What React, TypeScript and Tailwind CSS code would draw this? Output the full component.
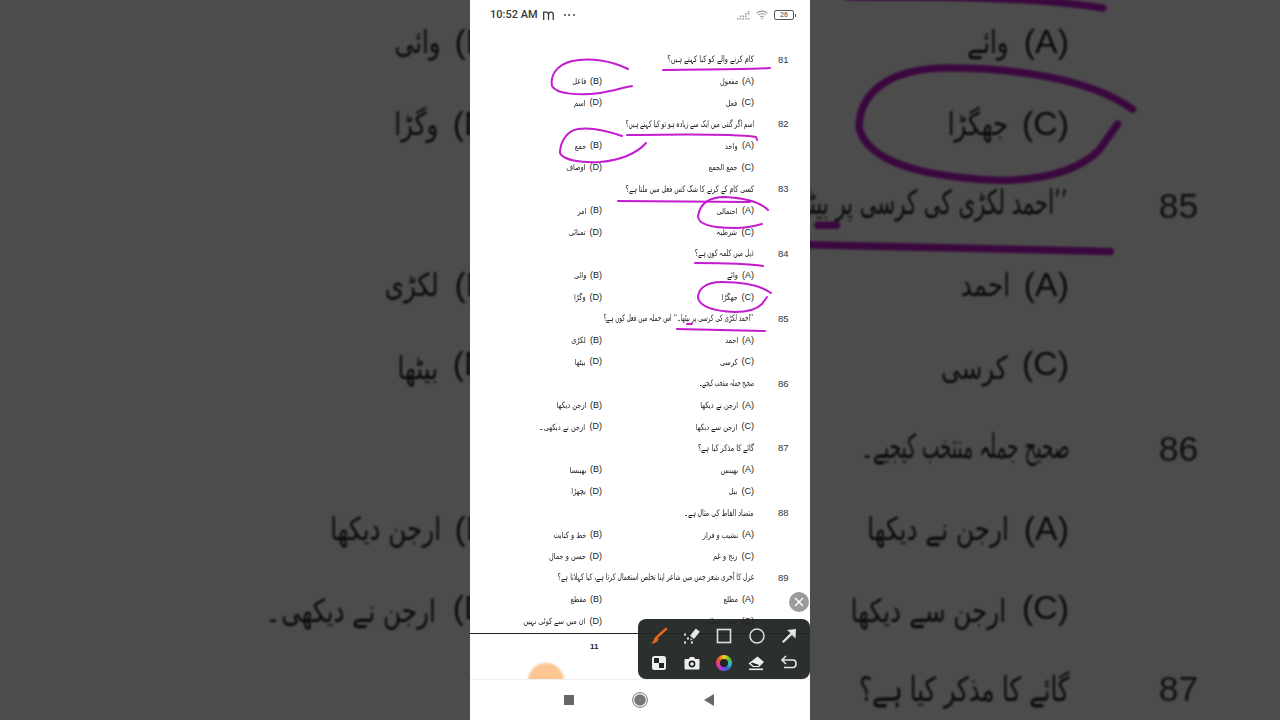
// Phone screenshot (Urdu question paper with pen marks) shown as a portrait video,
// with the same sheet enlarged and darkened on both sides of it.
const INK = '#c41ccf';

interface Question {
  no: number;
  text: string;
  fit: number; // horizontal squeeze, the original is set in a narrow Nastaliq
  a: string;
  b: string;
  c: string;
  d: string;
}

const questions: Question[] = [
  { no: 81, fit: 0.81, text: 'کام کرنے والے کو کیا کہتے ہیں؟', a: 'مفعول', b: 'فاعل', c: 'فعل', d: 'اسم' },
  { no: 82, fit: 0.71, text: 'اسم اگر گنتی میں ایک سے زیادہ ہو تو کیا کہتے ہیں؟', a: 'واحد', b: 'جمع', c: 'جمع الجمع', d: 'اوصاف' },
  { no: 83, fit: 0.77, text: 'کسی کام کے کرنے کا شک کس فعل میں ملتا ہے؟', a: 'احتمالی', b: 'امر', c: 'شرطیہ', d: 'تمنائی' },
  { no: 84, fit: 0.74, text: 'ذیل میں کلمہ کون ہے؟', a: 'وائے', b: 'وائی', c: 'جھگڑا', d: 'وگڑا' },
  { no: 85, fit: 0.7, text: '’’احمد لکڑی کی کرسی پر بیٹھا۔‘‘ اس جملہ میں فعل کون ہے؟', a: 'احمد', b: 'لکڑی', c: 'کرسی', d: 'بیٹھا' },
  { no: 86, fit: 0.61, text: 'صحیح جملہ منتخب کیجیے۔', a: 'ارجن نے دیکھا', b: 'ارجن دیکھا', c: 'ارجن سے دیکھا', d: 'ارجن نے دیکھی۔' },
  { no: 87, fit: 0.8, text: 'گائے کا مذکر کیا ہے؟', a: 'بھینس', b: 'بھینسا', c: 'بیل', d: 'بچھڑا' },
  { no: 88, fit: 0.78, text: 'متضاد الفاظ کی مثال ہے۔', a: 'نشیب و فراز', b: 'خط و کتابت', c: 'رنج و غم', d: 'حسن و جمال' },
  { no: 89, fit: 0.75, text: 'غزل کا آخری شعر جس میں شاعر اپنا تخلص استعمال کرتا ہے، کیا کہلاتا ہے؟', a: 'مطلع', b: 'مقطع', c: 'حسن مطلع', d: 'ان میں سے کوئی نہیں' },
];

function Option({ label, text }: { label: string; text: string }) {
  return (
    <div className="flex h-[21.6px] items-center justify-end gap-[4px] whitespace-nowrap text-[#222]">
      <span className="origin-right scale-x-[0.86] font-['DejaVu_Sans',sans-serif] text-[8.5px] [font-stretch:condensed]" dir="rtl">
        {text}
      </span>
      <span className="font-['Liberation_Sans',sans-serif] text-[9px]">({label})</span>
    </div>
  );
}

function PenMarks() {
  const strokes = [
    'M663 70 C700 69 740 70 770 68',
    'M628 69 C612 61 590 57 572 61 C556 65 550 76 552 86 C556 94 580 96 600 93 C612 91 622 88 632 86',
    'M627 135 C670 135 725 133 756 137 L757 140',
    'M622 136 C608 131 590 127 578 129 C566 131 560 143 560 153 C563 160 580 163 600 162 C622 160 636 154 646 143',
    'M618 201 L750 202',
    'M768 210 C760 202 745 198 725 197 C708 197 700 204 698 216 C698 224 712 228 735 228 C745 228 755 226 762 224',
    'M695 263 C720 263 745 263 763 266',
    'M771 293 C760 285 740 282 722 282 C704 282 698 290 698 298 C700 306 712 311 735 312 C750 312 758 308 762 304 L767 297',
    'M677 329 L765 331',
    'M687 324 L692 324',
  ];
  return (
    <svg className="absolute left-0 top-0 h-[604px] w-[340px]" viewBox="470 30 340 604" fill="none">
      {strokes.map((d) => (
        <path key={d} d={d} stroke={INK} strokeWidth="2" strokeLinecap="round" strokeLinejoin="round" />
      ))}
    </svg>
  );
}

function Sheet({ from = 81, to = 89 }: { from?: number; to?: number }) {
  return (
    <div className="relative h-[604px] w-[340px] border-b border-[#222] bg-white pt-[19px]">
      {questions.map((q) => (
        <div key={q.no} className={q.no < from || q.no > to ? 'invisible h-[64.8px]' : 'grid h-[64.8px] grid-cols-[132px_152px_24px_32px]'}>
          <div className="col-span-2 flex h-[21.6px] items-center whitespace-nowrap text-[#222]" dir="rtl">
            <span
              className="inline-block origin-right font-['DejaVu_Sans',sans-serif] text-[9px] [font-stretch:condensed]"
              style={{ transform: `scaleX(${q.fit})` }}
            >
              {q.text}
            </span>
          </div>
          <div />
          <div className="flex h-[21.6px] items-center font-['Liberation_Sans',sans-serif] text-[9.5px] text-[#333]">{q.no}</div>

          <Option label="B" text={q.b} />
          <Option label="A" text={q.a} />
          <div />
          <div />

          <Option label="D" text={q.d} />
          <Option label="C" text={q.c} />
          <div />
          <div />
        </div>
      ))}
      <PenMarks />
    </div>
  );
}

function StatusBar() {
  return (
    <div className="flex h-[30px] items-center pl-[20px] pr-[14px] text-[#3a3a3a]">
      <span className="font-['Roboto',sans-serif] text-[11px] font-medium">10:52 AM</span>
      <svg className="ml-[5px]" width="11" height="9" viewBox="0 0 11 9" fill="none" stroke="#3a3a3a" strokeWidth="1.3">
        <path d="M0.7 9 V1.2 H3 Q5.5 1.2 5.5 4 V9 M5.5 4 Q5.5 1.2 8 1.2 Q10.3 1.2 10.3 4 V9" />
      </svg>
      <span className="ml-[10px] flex gap-[2.5px]">
        <i className="size-[2px] rounded-full bg-[#444]" />
        <i className="size-[2px] rounded-full bg-[#444]" />
        <i className="size-[2px] rounded-full bg-[#444]" />
      </span>
      <span className="ml-auto flex items-center">
        <svg width="13" height="9" viewBox="0 0 13 9" fill="#9a9a9a">
          <rect x="0" y="7" width="1.5" height="1.5" />
          <rect x="2.7" y="7" width="1.5" height="1.5" />
          <rect x="2.7" y="4.5" width="1.5" height="1.5" />
          <rect x="5.4" y="7" width="1.5" height="1.5" />
          <rect x="5.4" y="4.5" width="1.5" height="1.5" />
          <rect x="8.1" y="7" width="1.5" height="1.5" />
          <rect x="8.1" y="4.5" width="1.5" height="1.5" />
          <rect x="8.1" y="2" width="1.5" height="1.5" />
          <rect x="10.8" y="7" width="1.5" height="1.5" />
          <rect x="10.8" y="2" width="1.5" height="1.5" />
          <rect x="10.8" y="0" width="1.5" height="1.5" />
        </svg>
        <svg className="ml-[6px]" width="12" height="10" viewBox="0 0 12 10" fill="none" stroke="#9a9a9a" strokeWidth="1.1">
          <path d="M0.6 3.3 C3.6 0.4 8.4 0.4 11.4 3.3" />
          <path d="M2.4 5.2 C4.4 3.3 7.6 3.3 9.6 5.2" />
          <path d="M4.2 7.1 C5.2 6.2 6.8 6.2 7.8 7.1" />
          <circle cx="6" cy="8.8" r="0.8" fill="#9a9a9a" stroke="none" />
        </svg>
        <span className="ml-[6px] flex h-[10px] w-[20px] items-center justify-center rounded-[2px] border border-[#555] font-['Roboto',sans-serif] text-[7px] leading-none text-[#444]">
          26
        </span>
        <i className="ml-px h-[3px] w-px bg-[#555]" />
      </span>
    </div>
  );
}

function PageFooter() {
  return (
    <div className="relative h-[45px] overflow-hidden bg-white pl-[120px] pt-[7px] font-['Liberation_Sans',sans-serif] text-[8px] font-bold leading-[12px] text-[#222]">
      11
      <div className="absolute left-[58px] top-[29px] size-[36px] rounded-full bg-[#fdc592] blur-[1px]" />
    </div>
  );
}

function NavBar() {
  return (
    <div className="flex h-[41px] items-center justify-center border-t border-[#f0f0f0] bg-white pr-[2px]">
      <i className="mr-[58px] size-[10px] bg-[#666]" />
      <svg width="16" height="16" viewBox="0 0 16 16">
        <circle cx="8" cy="8" r="7.4" fill="none" stroke="#777" strokeWidth="1" />
        <circle cx="8" cy="8" r="5.8" fill="#777" />
      </svg>
      <svg className="ml-[56px]" width="10" height="12" viewBox="0 0 10 12">
        <path d="M0 6 L10 0 V12 Z" fill="#666" />
      </svg>
    </div>
  );
}

function ToolbarRow({ children }: { children: React.ReactNode }) {
  return <div className="flex h-[27px] items-center justify-between">{children}</div>;
}

function Toolbar() {
  return (
    <div className="absolute left-[168px] top-[619px] w-[172px] rounded-[8px] bg-[#202422]/95 px-[12px] py-[3px]">
      <ToolbarRow>
        {/* brush */}
        <svg width="18" height="18" viewBox="0 0 18 18">
          <path d="M16 2 L7.5 9.5" stroke="#e8651f" strokeWidth="2.6" strokeLinecap="round" />
          <path d="M6.5 9.5 C4 10 4.5 12.5 3 14.5 C2.5 15.2 1.5 15.5 1 16 C4 16.8 8.2 15.5 8.6 11.5 Z" fill="#e8651f" />
        </svg>
        {/* highlighter with selection dots */}
        <svg width="18" height="18" viewBox="0 0 18 18" fill="#e8e8e8">
          <path d="M12.8 1.5 L16.8 4.8 L11 12 L7 8.8 Z" />
          <path d="M7.5 11 L9.5 12.8 L7.5 13.5 Z" />
          <rect x="1" y="6.5" width="2" height="2" />
          <rect x="1" y="14.5" width="2" height="2" />
          <rect x="8" y="14.5" width="2" height="2" />
          <rect x="4" y="10.5" width="2" height="2" />
        </svg>
        {/* rectangle */}
        <svg width="18" height="18" viewBox="0 0 18 18">
          <rect x="2.5" y="2.5" width="13" height="13" fill="none" stroke="#ddd" strokeWidth="1.6" />
        </svg>
        {/* ellipse */}
        <svg width="18" height="18" viewBox="0 0 18 18">
          <circle cx="9" cy="9" r="7" fill="none" stroke="#ddd" strokeWidth="1.5" />
        </svg>
        {/* arrow */}
        <svg width="18" height="18" viewBox="0 0 18 18" fill="#e4e4e4">
          <path d="M3.5 16 L2 14.5 L10.5 6 L7 3 L16 2 L15.5 11.5 L12 8 Z" />
        </svg>
      </ToolbarRow>
      <ToolbarRow>
        {/* mosaic */}
        <svg width="18" height="18" viewBox="0 0 18 18">
          <rect x="2" y="2" width="14" height="14" rx="2.5" fill="#eee" />
          <rect x="4" y="4" width="5" height="5" fill="#202422" />
          <rect x="9" y="9" width="5" height="5" fill="#202422" />
        </svg>
        {/* camera */}
        <svg width="18" height="18" viewBox="0 0 18 18">
          <path d="M2.5 5 H6 L7 3 H11 L12 5 H15.5 Q16.5 5 16.5 6 V14.5 Q16.5 15.5 15.5 15.5 H2.5 Q1.5 15.5 1.5 14.5 V6 Q1.5 5 2.5 5 Z" fill="#eee" />
          <circle cx="9" cy="10" r="3.4" fill="#202422" />
          <circle cx="9" cy="10" r="1.8" fill="#eee" />
        </svg>
        {/* colour ring */}
        <div className="flex size-[16px] items-center justify-center rounded-full bg-[conic-gradient(#f5d21f,#58c23a,#2fb5c9,#3b5fd8,#a63bd0,#e8368f,#ef5a2a,#f5d21f)]">
          <div className="size-[8px] rounded-full bg-[#202422]" />
        </div>
        {/* eraser */}
        <svg width="18" height="18" viewBox="0 0 18 18">
          <path d="M10.5 2.5 L17 8 L12 13 H6 L1.5 9.5 Z" fill="#eee" />
          <path d="M5 8.5 L3.8 9.5 L7 12 H11 L12 11 Z" fill="#202422" />
          <rect x="2" y="14.5" width="14" height="1.6" fill="#eee" />
        </svg>
        {/* undo */}
        <svg width="18" height="18" viewBox="0 0 18 18" fill="none" stroke="#e8e8e8" strokeWidth="1.6">
          <path d="M2 6 H13 Q16 6 16 9.5 Q16 13.5 13 13.5 H4" />
          <path d="M6 2 L2 6 L6 10" />
        </svg>
      </ToolbarRow>
    </div>
  );
}

// Enlarged sheet under a 70% black veil, only questions 84-87 reach the frame.
function SidePanel({ zoomClass }: { zoomClass: string }) {
  return (
    <div className="relative h-[720px] w-[470px] shrink-0 overflow-hidden bg-white">
      <div className={zoomClass}>
        <Sheet from={84} to={87} />
      </div>
      <div className="absolute inset-0 bg-black/70" />
    </div>
  );
}

export default function App() {
  return (
    <div className="flex h-[720px] w-[1280px] overflow-hidden bg-white">
      <SidePanel zoomClass="origin-top-left blur-[0.25px] [transform:translate(5px,-876px)_scale(3.746)]" />

      <div className="relative flex h-[720px] w-[340px] shrink-0 flex-col bg-white">
        <StatusBar />
        <Sheet />
        <PageFooter />
        <NavBar />
        <Toolbar />
        <div className="absolute left-[319px] top-[592px] flex size-[20px] items-center justify-center rounded-full bg-[#9b9b9b]">
          <svg width="10" height="10" viewBox="0 0 10 10" stroke="#fff" strokeWidth="1.4">
            <path d="M1 1 L9 9 M9 1 L1 9" />
          </svg>
        </div>
      </div>

      <SidePanel zoomClass="origin-top-left blur-[0.25px] [transform:translate(-805px,-876px)_scale(3.746)]" />
    </div>
  );
}
